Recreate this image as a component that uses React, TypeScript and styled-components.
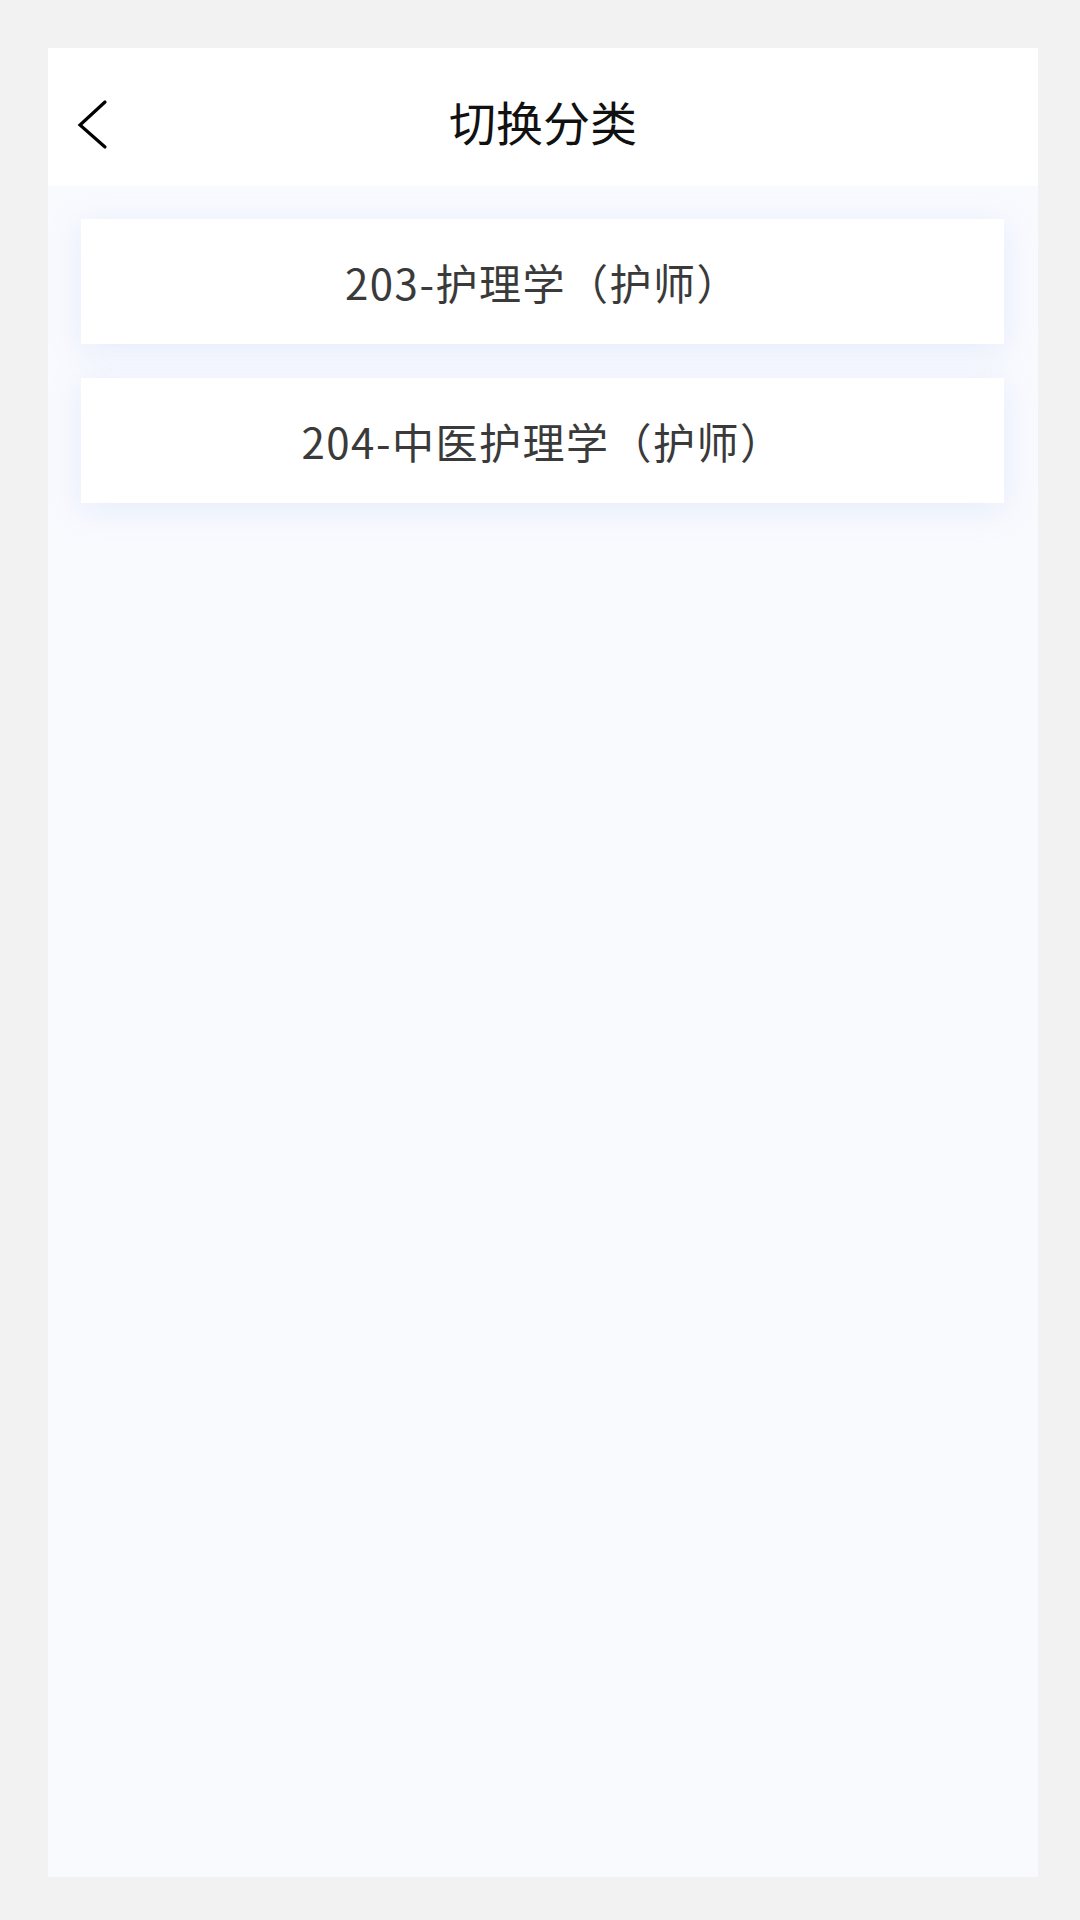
import React from "react";
import styled, { createGlobalStyle } from "styled-components";

const GlobalStyle = createGlobalStyle`
  html, body {
    margin: 0;
    padding: 0;
    background: #f2f2f2;
  }
  body {
    font-family: "Noto Sans CJK SC", "Noto Sans", sans-serif;
  }
`;

export const Page = styled.div`
  padding: 48px 42px 43px 48px;
  box-sizing: border-box;
  width: 1080px;
  height: 1920px;
`;

export const Frame = styled.div`
  display: flex;
  flex-direction: column;
  width: 990px;
  height: 1829px;
  background: #f9fafe;
`;

export const Header = styled.div`
  position: relative;
  display: flex;
  align-items: center;
  justify-content: center;
  height: 138px;
  flex-shrink: 0;
  background: #ffffff;

  h1 {
    margin: 0;
    padding-top: 6px;
    font-size: 47px;
    font-weight: 400;
    color: #111111;
    line-height: 1;
  }
`;

// back arrow sits over the header, title stays centred
export const BackBtn = styled.button`
  position: absolute;
  left: 26px;
  top: 50px;
  width: 36px;
  height: 52px;
  padding: 0;
  border: none;
  background: transparent;
  cursor: pointer;
`;

export const List = styled.div`
  display: flex;
  flex-direction: column;
  gap: 34px;
  padding: 33px 34px 0 33px;
`;

export const Card = styled.div`
  display: flex;
  align-items: center;
  justify-content: center;
  height: 125px;
  background: #ffffff;
  box-shadow: 0 6px 30px rgba(205, 220, 248, 0.45);
  font-size: 42px;
  letter-spacing: 1.5px;
  color: #3a3a3a;
  cursor: pointer;
`;

const items = ["203-护理学（护师）", "204-中医护理学（护师）"];

export default function App() {
  return (
    <>
      <GlobalStyle />
      <Page>
        <Frame>
          <Header>
            <BackBtn aria-label="返回">
              <svg width="36" height="52" viewBox="0 0 36 52">
                <polyline
                  points="31,4 6,27 31,49"
                  fill="none"
                  stroke="#000"
                  strokeWidth="3.2"
                  strokeLinecap="round"
                  strokeLinejoin="miter"
                />
              </svg>
            </BackBtn>
            <h1>切换分类</h1>
          </Header>
          <List>
            {items.map((t) => (
              <Card key={t}>{t}</Card>
            ))}
          </List>
        </Frame>
      </Page>
    </>
  );
}
